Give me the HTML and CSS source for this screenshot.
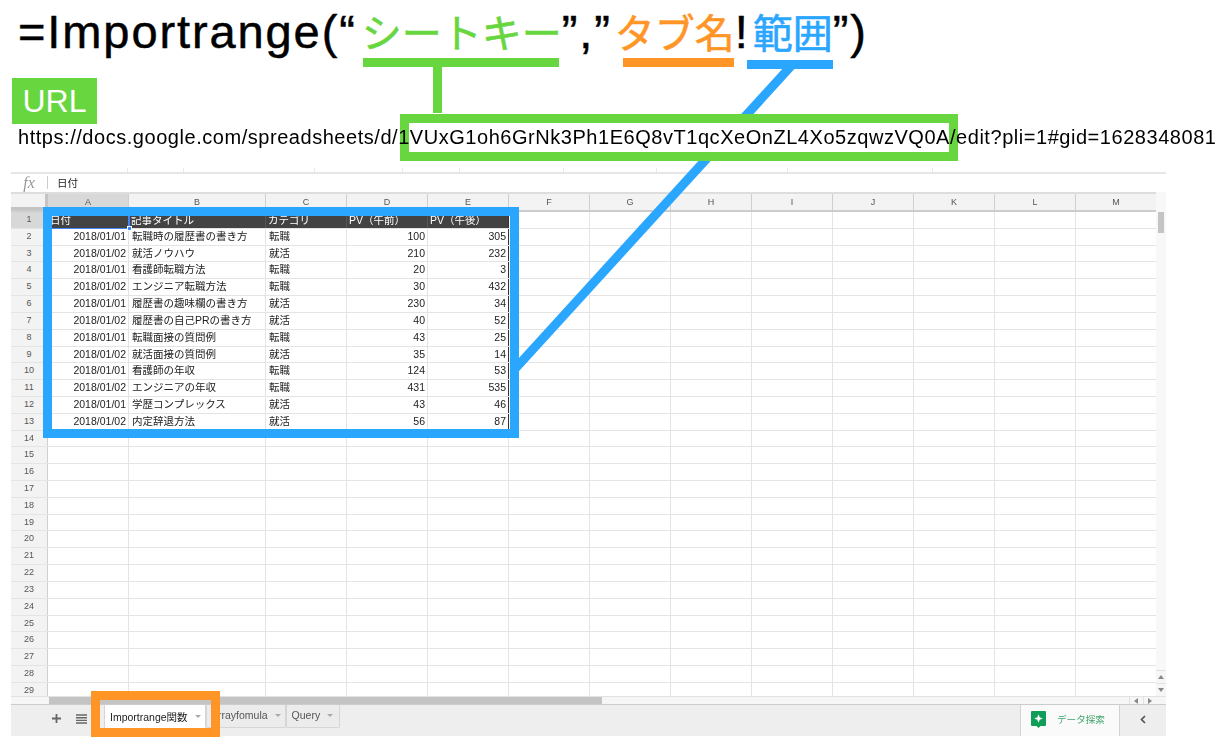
FILE: index.html
```html
<!DOCTYPE html>
<html lang="ja">
<head>
    <meta charset="UTF-8">
    <title>Importrange</title>
    <link rel="stylesheet" href="styles.css">
</head>
<body>
<div class="page">
    <h1 class="formula">=Importrange(“<span class="jp green">シートキー</span>”,”<span class="jp orange">タブ名</span>!<span class="jp blue">範囲</span>”)</h1>
    <div class="url-label">URL</div>
    <p class="url">https://docs.google.com/spreadsheets/d/1VUxG1oh6GrNk3Ph1E6Q8vT1qcXeOnZL4Xo5zqwzVQ0A/edit?pli=1#gid=1628348081</p>

    <div class="sheet">
        <div class="toolbar-edge"><span></span><span></span><span></span><span></span><span></span><span></span><span></span><span></span><span></span></div>
        <div class="fx-bar"><span class="fx">fx</span><span class="fx-value">日付</span></div>
        <div class="sheet-body">
            <div class="grid">
                <div class="row head"><b class="corner"></b><b class="sel">A</b><b>B</b><b>C</b><b>D</b><b>E</b><b>F</b><b>G</b><b>H</b><b>I</b><b>J</b><b>K</b><b>L</b><b>M</b></div>
                <div class="cells">
                    <div class="row title"><b class="sel">1</b><i>日付</i><i>記事タイトル</i><i>カテゴリ</i><i>PV（午前）</i><i class="last">PV（午後）</i><i></i><i></i><i></i><i></i><i></i><i></i><i></i><i></i></div>
                    <div class="row"><b>2</b><i class="r">2018/01/01</i><i>転職時の履歴書の書き方</i><i>転職</i><i class="r">100</i><i class="r last">305</i><i></i><i></i><i></i><i></i><i></i><i></i><i></i><i></i></div>
                    <div class="row"><b>3</b><i class="r">2018/01/02</i><i>就活ノウハウ</i><i>就活</i><i class="r">210</i><i class="r last">232</i><i></i><i></i><i></i><i></i><i></i><i></i><i></i><i></i></div>
                    <div class="row"><b>4</b><i class="r">2018/01/01</i><i>看護師転職方法</i><i>転職</i><i class="r">20</i><i class="r last">3</i><i></i><i></i><i></i><i></i><i></i><i></i><i></i><i></i></div>
                    <div class="row"><b>5</b><i class="r">2018/01/02</i><i>エンジニア転職方法</i><i>転職</i><i class="r">30</i><i class="r last">432</i><i></i><i></i><i></i><i></i><i></i><i></i><i></i><i></i></div>
                    <div class="row"><b>6</b><i class="r">2018/01/01</i><i>履歴書の趣味欄の書き方</i><i>就活</i><i class="r">230</i><i class="r last">34</i><i></i><i></i><i></i><i></i><i></i><i></i><i></i><i></i></div>
                    <div class="row"><b>7</b><i class="r">2018/01/02</i><i>履歴書の自己PRの書き方</i><i>就活</i><i class="r">40</i><i class="r last">52</i><i></i><i></i><i></i><i></i><i></i><i></i><i></i><i></i></div>
                    <div class="row"><b>8</b><i class="r">2018/01/01</i><i>転職面接の質問例</i><i>転職</i><i class="r">43</i><i class="r last">25</i><i></i><i></i><i></i><i></i><i></i><i></i><i></i><i></i></div>
                    <div class="row"><b>9</b><i class="r">2018/01/02</i><i>就活面接の質問例</i><i>就活</i><i class="r">35</i><i class="r last">14</i><i></i><i></i><i></i><i></i><i></i><i></i><i></i><i></i></div>
                    <div class="row"><b>10</b><i class="r">2018/01/01</i><i>看護師の年収</i><i>転職</i><i class="r">124</i><i class="r last">53</i><i></i><i></i><i></i><i></i><i></i><i></i><i></i><i></i></div>
                    <div class="row"><b>11</b><i class="r">2018/01/02</i><i>エンジニアの年収</i><i>転職</i><i class="r">431</i><i class="r last">535</i><i></i><i></i><i></i><i></i><i></i><i></i><i></i><i></i></div>
                    <div class="row"><b>12</b><i class="r">2018/01/01</i><i>学歴コンプレックス</i><i>就活</i><i class="r">43</i><i class="r last">46</i><i></i><i></i><i></i><i></i><i></i><i></i><i></i><i></i></div>
                    <div class="row"><b>13</b><i class="r">2018/01/02</i><i>内定辞退方法</i><i>就活</i><i class="r">56</i><i class="r last">87</i><i></i><i></i><i></i><i></i><i></i><i></i><i></i><i></i></div>
                    <div class="row"><b>14</b><i></i><i></i><i></i><i></i><i></i><i></i><i></i><i></i><i></i><i></i><i></i><i></i><i></i></div>
                    <div class="row"><b>15</b><i></i><i></i><i></i><i></i><i></i><i></i><i></i><i></i><i></i><i></i><i></i><i></i><i></i></div>
                    <div class="row"><b>16</b><i></i><i></i><i></i><i></i><i></i><i></i><i></i><i></i><i></i><i></i><i></i><i></i><i></i></div>
                    <div class="row"><b>17</b><i></i><i></i><i></i><i></i><i></i><i></i><i></i><i></i><i></i><i></i><i></i><i></i><i></i></div>
                    <div class="row"><b>18</b><i></i><i></i><i></i><i></i><i></i><i></i><i></i><i></i><i></i><i></i><i></i><i></i><i></i></div>
                    <div class="row"><b>19</b><i></i><i></i><i></i><i></i><i></i><i></i><i></i><i></i><i></i><i></i><i></i><i></i><i></i></div>
                    <div class="row"><b>20</b><i></i><i></i><i></i><i></i><i></i><i></i><i></i><i></i><i></i><i></i><i></i><i></i><i></i></div>
                    <div class="row"><b>21</b><i></i><i></i><i></i><i></i><i></i><i></i><i></i><i></i><i></i><i></i><i></i><i></i><i></i></div>
                    <div class="row"><b>22</b><i></i><i></i><i></i><i></i><i></i><i></i><i></i><i></i><i></i><i></i><i></i><i></i><i></i></div>
                    <div class="row"><b>23</b><i></i><i></i><i></i><i></i><i></i><i></i><i></i><i></i><i></i><i></i><i></i><i></i><i></i></div>
                    <div class="row"><b>24</b><i></i><i></i><i></i><i></i><i></i><i></i><i></i><i></i><i></i><i></i><i></i><i></i><i></i></div>
                    <div class="row"><b>25</b><i></i><i></i><i></i><i></i><i></i><i></i><i></i><i></i><i></i><i></i><i></i><i></i><i></i></div>
                    <div class="row"><b>26</b><i></i><i></i><i></i><i></i><i></i><i></i><i></i><i></i><i></i><i></i><i></i><i></i><i></i></div>
                    <div class="row"><b>27</b><i></i><i></i><i></i><i></i><i></i><i></i><i></i><i></i><i></i><i></i><i></i><i></i><i></i></div>
                    <div class="row"><b>28</b><i></i><i></i><i></i><i></i><i></i><i></i><i></i><i></i><i></i><i></i><i></i><i></i><i></i></div>
                    <div class="row"><b>29</b><i></i><i></i><i></i><i></i><i></i><i></i><i></i><i></i><i></i><i></i><i></i><i></i><i></i></div>
                    <div class="a1-mark"></div>
                </div>
            </div>
            <div class="vscroll">
                <div class="vthumb"></div>
                <div class="vbtn"><svg width="6" height="4" viewBox="0 0 6 4"><path d="M0 4L3 0L6 4Z" fill="#888"/></svg></div>
                <div class="vbtn"><svg width="6" height="4" viewBox="0 0 6 4"><path d="M0 0L3 4L6 0Z" fill="#888"/></svg></div>
            </div>
        </div>
        <div class="hscroll">
            <div class="hthumb"></div>
            <div class="hbtn"><svg width="4" height="6" viewBox="0 0 4 6"><path d="M4 0L0 3L4 6Z" fill="#888"/></svg></div>
            <div class="hbtn"><svg width="4" height="6" viewBox="0 0 4 6"><path d="M0 0L4 3L0 6Z" fill="#888"/></svg></div>
        </div>
        <div class="tabbar">
            <svg class="add" width="11" height="11" viewBox="0 0 11 11"><path d="M5.500 1v9M1 5.500h9" stroke="#666" stroke-width="1.800"/></svg>
            <svg class="all" width="11" height="10" viewBox="0 0 11 10"><path d="M0 1h11M0 3.700h11M0 6.400h11M0 9h11" stroke="#666" stroke-width="1.400"/></svg>
            <div class="tab active">Importrange関数<span class="caret"></span></div>
            <div class="tab">Arrayfomula<span class="caret"></span></div>
            <div class="tab query">Query<span class="caret"></span></div>
            <div class="explore">
                <svg width="15" height="17" viewBox="0 0 15 17"><path d="M1 0h13a1 1 0 0 1 1 1v13a1 1 0 0 1-1 1H9.500L7.500 17L5.500 15H1a1 1 0 0 1-1-1V1a1 1 0 0 1 1-1z" fill="#0f9d58"/><path d="M7.500 3.200L8.700 6.300L11.800 7.500L8.700 8.700L7.500 11.800L6.300 8.700L3.200 7.500L6.300 6.300Z" fill="#fff"/></svg>
                <span>データ探索</span>
            </div>
            <div class="collapse"><svg width="6" height="9" viewBox="0 0 6 9"><path d="M5 1L1.500 4.500L5 8" fill="none" stroke="#555" stroke-width="1.700"/></svg></div>
        </div>
    </div>

    <svg class="leader" width="1226" height="754" viewBox="0 0 1226 754"><path d="M792 65L514 370" stroke="#2aa6ff" stroke-width="9" fill="none"/></svg>
    <div class="mark line-green"></div>
    <div class="mark stem-green"></div>
    <div class="mark line-orange"></div>
    <div class="mark line-blue"></div>
    <div class="mark box-key"></div>
    <div class="mark box-range"></div>
    <div class="mark box-tab"></div>
</div>
</body>
</html>
```

FILE: styles.css
```css
body{
    margin: 0;
    background-color: white;
    color: black;
    font-family: "Liberation Sans", "Noto Sans CJK JP", sans-serif;
}
.page{
    position: relative;
    width: 1226px;
    height: 754px;
    overflow: hidden;
}
.formula{
    margin: 0;
    padding-left: 18px;
    height: 78px;
    font-size: 47px;
    font-weight: normal;
    letter-spacing: 1.9px;
    line-height: 64px;
    white-space: nowrap;
    -webkit-text-stroke: 0.5px currentColor;
}
.jp{
    font-size: 40px;
    letter-spacing: 0;
    -webkit-text-stroke: 0.6px currentColor;
}
.green{ color: #68d63f; margin-left: 5px; }
.orange{ color: #ff9526; margin-left: 3px; }
.blue{ color: #2aa6ff; margin-left: 3px; }
.url-label{
    margin-left: 12px;
    width: 85px;
    height: 46px;
    line-height: 46px;
    text-align: center;
    font-size: 32px;
    color: white;
    background-color: #68d63f;
}
.url{
    position: relative;
    z-index: 3;
    margin: 0;
    padding-left: 18px;
    height: 44px;
    line-height: 27px;
    font-size: 20px;
    letter-spacing: 0.54px;
    white-space: nowrap;
}

/* spreadsheet */
.sheet{
    margin-left: 11px;
    width: 1155px;
    font-size: 10.5px;
    color: #222;
    filter: blur(0.3px);
}
.toolbar-edge{
    display: grid;
    grid-template-columns: 117px 56px 131px 88px 57px 104px 93px 131px 145px;
    height: 4px;
}
.toolbar-edge span{
    border-right: 1px solid #e8e8e8;
}
.fx-bar{
    display: flex;
    align-items: center;
    height: 16px;
    padding-bottom: 2px;
    border-top: 2px solid #e6e6e6;
}
.fx{
    width: 36px;
    height: 13px;
    line-height: 13px;
    text-align: center;
    font-family: "Liberation Serif", serif;
    font-style: italic;
    font-size: 16px;
    color: #999;
    border-right: 1px solid #ccc;
}
.fx-value{
    margin-left: 9px;
}
.sheet-body{
    display: flex;
    height: 504px;
}
.grid{
    width: 1145px;
}
.cells{
    position: relative;
    height: 484px;
    overflow: hidden;
}
.row{
    display: grid;
    grid-template-columns: 37px 81px 137px 81px 81px 81px repeat(8, 81px);
    height: 16.82px;
    box-sizing: border-box;
    border-bottom: 1.5px solid #e4e4e4;
    line-height: 15.5px;
}
.row b{
    font-weight: normal;
    font-size: 9px;
    text-align: center;
    color: #555;
    background-color: #f3f3f3;
    border-right: 1.5px solid #d0d0d0;
}
.row i{
    font-style: normal;
    padding: 0 2px 0 3px;
    white-space: nowrap;
    overflow: hidden;
    border-right: 1.5px solid #e4e4e4;
}
.row .r{
    text-align: right;
}
.row .last{
    border-right: 1.5px solid #333;
}
.row.head{
    box-sizing: content-box;
    height: 16px;
    line-height: 16px;
    border-top: 2px solid #ddd;
    border-bottom: 2px solid #ccc;
}
.row.head b{
    border-right: 1.5px solid #cfcfcf;
}
.row b.corner{
    background-color: #f3f3f3;
    border-right: 3px solid #c4c4c4;
    border-bottom: 3px solid #c4c4c4;
}
.row b.sel{
    background-color: #d8d8d8;
}
.row.title i{
    background-color: #434343;
    color: white;
    border-right-color: #555;
    padding-left: 2px;
    line-height: 17px;
}
.row.title i:nth-child(n+7){
    background-color: white;
    border-right-color: #e4e4e4;
}
.row.title i.last{
    border-right-color: #333;
}
.a1-mark{
    position: absolute;
    left: 37px;
    top: 0;
    width: 80px;
    height: 16px;
    border-right: 2px solid #4285f4;
    border-bottom: 1.5px solid #4285f4;
}
.a1-mark::after{
    content: "";
    position: absolute;
    right: -4px;
    bottom: -3px;
    width: 5px;
    height: 5px;
    background-color: #4285f4;
    border: 1px solid white;
    box-sizing: border-box;
}
.vscroll{
    display: flex;
    flex-direction: column;
    width: 10px;
    background-color: #f8f8f8;
    padding-top: 20px;
    height: 484px;
}
.vthumb{
    margin: 0 2px auto;
    height: 21px;
    background-color: #c4c4c4;
}
.vbtn{
    display: flex;
    align-items: center;
    justify-content: center;
    height: 12px;
    border-top: 1.5px solid #e2e2e2;
    background-color: #f6f6f6;
}
.hscroll{
    display: flex;
    align-items: stretch;
    box-sizing: border-box;
    height: 8px;
    background-color: #f6f6f6;
    border-top: 1px solid #e2e2e2;
}
.hthumb{
    margin-left: 38px;
    margin-right: auto;
    width: 553px;
    background-color: #c4c4c4;
}
.hbtn{
    display: flex;
    align-items: center;
    justify-content: center;
    width: 12px;
    margin-right: 1px;
    border-left: 1px solid #e2e2e2;
}
.hbtn:last-child{
    margin-right: 10px;
}
.tabbar{
    display: flex;
    align-items: flex-start;
    height: 32px;
    background-color: #eeeeee;
    border-top: 1px solid #ccc;
    box-sizing: border-box;
}
.add{
    margin: 8px 0 0 40px;
}
.all{
    margin: 9px 0 0 14px;
}
.tab{
    display: flex;
    align-items: center;
    height: 23px;
    padding: 0 4px 2px;
    box-sizing: border-box;
    color: #555;
    background-color: #ececec;
    border: 1px solid #d6d6d6;
    border-top: 0;
    border-radius: 0 0 2px 2px;
}
.tab.active{
    margin-left: 17px;
    padding: 0 0 0 5px;
    width: 102px;
    height: 24px;
    color: #222;
    background-color: white;
}
.tab.query{
    padding-right: 6px;
    padding-left: 5px;
}
.caret{
    margin-left: 7px;
    width: 0;
    height: 0;
    border-left: 3px solid transparent;
    border-right: 3px solid transparent;
    border-top: 3px solid #aaa;
}
.explore{
    display: flex;
    align-items: center;
    gap: 11px;
    margin-left: auto;
    box-sizing: border-box;
    padding: 0 0 3px 10px;
    width: 100px;
    height: 31px;
    font-size: 9.6px;
    color: #3fa56c;
    background-color: #fafafa;
    border-left: 1px solid #d2d2d2;
    border-right: 1px solid #d2d2d2;
}
.collapse{
    display: flex;
    align-items: center;
    justify-content: center;
    width: 46px;
    height: 31px;
    padding-bottom: 3px;
    box-sizing: border-box;
}

/* annotations drawn over the screenshot */
.leader{
    position: absolute;
    left: 0;
    top: 0;
}
.mark{
    position: absolute;
    box-sizing: border-box;
}
.line-green{
    left: 363px;
    top: 58px;
    width: 196px;
    height: 9px;
    background-color: #68d63f;
}
.stem-green{
    left: 433px;
    top: 67px;
    width: 9px;
    height: 46px;
    background-color: #68d63f;
}
.line-orange{
    left: 623px;
    top: 58px;
    width: 111px;
    height: 9px;
    background-color: #ff9526;
}
.line-blue{
    left: 747px;
    top: 60px;
    width: 86px;
    height: 9px;
    background-color: #2aa6ff;
}
.box-key{
    left: 400px;
    top: 114px;
    width: 558px;
    height: 47px;
    background-color: white;
    border: 9px solid #68d63f;
}
.box-range{
    left: 43px;
    top: 207px;
    width: 476px;
    height: 231px;
    border: 9px solid #2aa6ff;
}
.box-tab{
    left: 91px;
    top: 691px;
    width: 129px;
    height: 46px;
    border: 9px solid #ff9526;
}
```
